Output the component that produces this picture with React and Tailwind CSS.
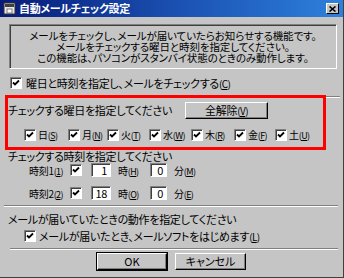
const FONT = "font-['Noto_Sans_CJK_JP',sans-serif] [font-feature-settings:'palt']";

const Check = ({ checked = true }) => (
  <div className="w-[12px] h-[12px] bg-white border border-t-[#808080] border-l-[#808080] border-r-white border-b-white shadow-[inset_1px_1px_0_#404040] flex items-center justify-center shrink-0">
    {checked && (
      <svg width="8" height="8" viewBox="0 0 8 8">
        <path d="M1 3.5 L3 5.5 L7 1.5" stroke="#000" strokeWidth="1.8" fill="none" />
      </svg>
    )}
  </div>
);

const Mn = ({ pre, k, small }) => (
  <span className={`whitespace-nowrap ${small ? 'text-[10px]' : ''}`}>
    {pre}
    <span className={small ? 'text-[9px] tracking-[-0.6px]' : 'text-[10px] tracking-[-0.6px]'}>(<u>{k}</u>)</span>
  </span>
);

const days = [
  { label: '日', k: 'S', w: 'w-[44px]' },
  { label: '月', k: 'N', w: 'w-[39px]' },
  { label: '火', k: 'T', w: 'w-[42px]' },
  { label: '水', k: 'W', w: 'w-[42px]' },
  { label: '木', k: 'R', w: 'w-[43px]' },
  { label: '金', k: 'F', w: 'w-[41px]' },
  { label: '土', k: 'U', w: 'w-[40px]' },
];

const Field = ({ value, w }) => (
  <div className={`${w} h-[14px] bg-white border border-t-[#808080] border-l-[#808080] border-r-white border-b-white shadow-[inset_1px_1px_0_#404040] flex items-center justify-end pr-[3px] text-[11px] leading-none text-black shrink-0`}>
    {value}
  </div>
);

const Btn = ({ children, w, isDefault }) => (
  <div className={`${w} h-[17px] bg-[#c5c5c5] flex items-center justify-center text-[11px] leading-none text-black shrink-0 ${isDefault ? 'outline outline-1 outline-black' : ''} border border-t-white border-l-white border-r-black border-b-black shadow-[inset_-1px_-1px_0_#808080]`}>
    {children}
  </div>
);

const Etched = ({ className }) => (
  <div className={`h-[2px] border-t border-t-[#808080] border-b border-b-white ${className}`} />
);

export default function App() {
  return (
    <div className={`w-[344px] h-[278px] bg-[#c5c5c5] text-black text-[11px] leading-none overflow-hidden whitespace-nowrap border-r border-b border-r-[#404040] border-b-[#404040] ${FONT}`}>
      {/* title bar */}
      <div className="h-[17px] bg-gradient-to-r from-[#0a1a78] via-[#1a4fb0] to-[#2f80dc] flex items-center pl-[3px] pr-[4px]">
        <svg width="13" height="13" viewBox="0 0 13 13">
          <rect x="1" y="1" width="11" height="11" fill="#e8e8e8" stroke="#303030" />
          <rect x="2" y="2" width="9" height="3" fill="#404040" />
          <rect x="4" y="7" width="5" height="4" fill="#fff" stroke="#606060" strokeWidth="0.8" />
        </svg>
        <span className="ml-[3px] text-white font-bold text-[11px] tracking-[-0.3px]">自動メールチェック設定</span>
        <div className="ml-auto w-[13px] h-[11px] bg-[#c5c5c5] border border-t-white border-l-white border-r-black border-b-black flex items-center justify-center">
          <svg width="7" height="6" viewBox="0 0 7 6">
            <path d="M0.5 0.5 L6.5 5.5 M6.5 0.5 L0.5 5.5" stroke="#000" strokeWidth="1.6" />
          </svg>
        </div>
      </div>

      {/* info box */}
      <div className="mt-[7px] ml-[9px] w-[328px] h-[45px] border border-t-[#808080] border-l-[#808080] border-r-white border-b-white shadow-[inset_1px_1px_0_#404040] flex flex-col items-center justify-center text-[10.5px] leading-[11px] tracking-[-0.1px]">
        <div>メールをチェックし、メールが届いていたらお知らせする機能です。</div>
        <div>メールをチェックする曜日と時刻を指定してください。</div>
        <div>この機能は、パソコンがスタンバイ状態のときのみ動作します。</div>
      </div>

      {/* main checkbox */}
      <div className="mt-[8px] pl-[10px] h-[12px] flex items-center gap-[4px] tracking-[-0.3px]">
        <Check />
        <Mn pre="曜日と時刻を指定し、メールをチェックする" k="C" />
      </div>

      {/* day group */}
      <div className="mt-[6px] flex items-start">
        <div className="ml-[5px] w-[321px] h-[55px] shrink-0 border-[3px] border-[#ff0000] tracking-[-0.3px]">
          <div className="mt-[3px] h-[18px] flex items-center">
            <div className="w-[177px]">チェックする曜日を指定してください</div>
            <Btn w="w-[83px]"><Mn pre="全解除" k="V" /></Btn>
          </div>
          <div className="mt-[10px] h-[12px] flex items-center pl-[16px]">
            {days.map((d) => (
              <div key={d.label} className={`${d.w} shrink-0 flex items-center gap-[2px]`}>
                <Check />
                <Mn pre={d.label} k={d.k} small />
              </div>
            ))}
          </div>
        </div>
        <Etched className="mt-[1px] flex-1 mr-[3px]" />
      </div>

      {/* time section */}
      <div className="mt-[1px] pl-[8px] h-[11px] flex items-center tracking-[-0.3px]">チェックする時刻を指定してください</div>
      <div className="mt-[1px] h-[14px] flex items-center tracking-[-0.3px]">
        <div className="ml-[29px] w-[41px] shrink-0"><Mn pre="時刻1" k="1" small /></div>
        <Check />
        <div className="ml-[9px]"><Field value="1" w="w-[20px]" /></div>
        <div className="ml-[7px] w-[32px] shrink-0"><Mn pre="時" k="H" small /></div>
        <Field value="0" w="w-[17px]" />
        <div className="ml-[7px]"><Mn pre="分" k="M" small /></div>
      </div>
      <div className="mt-[9px] h-[14px] flex items-center tracking-[-0.3px]">
        <div className="ml-[29px] w-[41px] shrink-0"><Mn pre="時刻2" k="2" small /></div>
        <Check />
        <div className="ml-[9px]"><Field value="18" w="w-[20px]" /></div>
        <div className="ml-[7px] w-[32px] shrink-0"><Mn pre="時" k="O" small /></div>
        <Field value="0" w="w-[17px]" />
        <div className="ml-[7px]"><Mn pre="分" k="E" small /></div>
      </div>

      <Etched className="mt-[5px] ml-[4px] mr-[5px]" />

      <div className="mt-[6px] pl-[8px] h-[12px] flex items-center tracking-[-0.3px]">メールが届いていたときの動作を指定してください</div>
      <div className="mt-[5px] pl-[24px] h-[12px] flex items-center gap-[3px] tracking-[-0.3px]">
        <Check />
        <Mn pre="メールが届いたとき、メールソフトをはじめます" k="L" />
      </div>

      <Etched className="mt-[6px] ml-[10px] mr-[5px]" />

      <div className="mt-[3px] flex gap-[8px] pl-[97px]">
        <Btn w="w-[70px]" isDefault>OK</Btn>
        <Btn w="w-[71px]">キャンセル</Btn>
      </div>
    </div>
  );
}
